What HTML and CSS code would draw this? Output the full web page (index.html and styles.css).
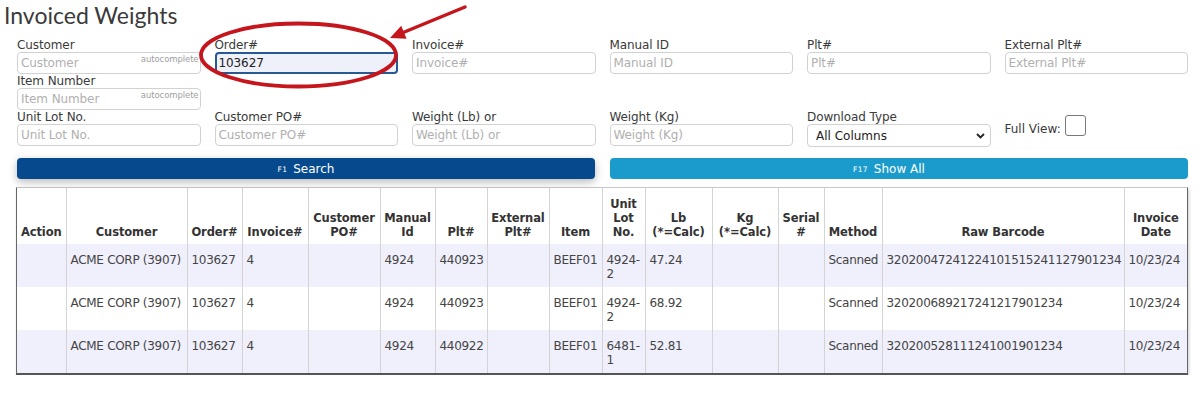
FILE: index.html
```html
<!DOCTYPE html>
<html lang="en">
<head>
<meta charset="utf-8">
<title>Invoiced Weights</title>
<link rel="stylesheet" href="styles.css">
</head>
<body>
<div class="page">
  <h1 class="title">Invoiced Weights</h1>

  <form class="filters">
    <div class="field">
      <label class="lbl">Customer</label>
      <div class="ac"><input class="inp" placeholder="Customer"><span class="ac-tag">autocomplete</span></div>
    </div>
    <div class="field">
      <label class="lbl">Order#</label>
      <input class="inp inp-active" value="103627" placeholder="Order#">
    </div>
    <div class="field">
      <label class="lbl">Invoice#</label>
      <input class="inp" placeholder="Invoice#">
    </div>
    <div class="field">
      <label class="lbl">Manual ID</label>
      <input class="inp" placeholder="Manual ID">
    </div>
    <div class="field">
      <label class="lbl">Plt#</label>
      <input class="inp" placeholder="Plt#">
    </div>
    <div class="field">
      <label class="lbl">External Plt#</label>
      <input class="inp" placeholder="External Plt#">
    </div>

    <div class="field col-first">
      <label class="lbl">Item Number</label>
      <div class="ac"><input class="inp" placeholder="Item Number"><span class="ac-tag">autocomplete</span></div>
    </div>

    <div class="field col-first">
      <label class="lbl">Unit Lot No.</label>
      <input class="inp" placeholder="Unit Lot No.">
    </div>
    <div class="field">
      <label class="lbl">Customer PO#</label>
      <input class="inp" placeholder="Customer PO#">
    </div>
    <div class="field">
      <label class="lbl">Weight (Lb) or</label>
      <input class="inp" placeholder="Weight (Lb) or">
    </div>
    <div class="field">
      <label class="lbl">Weight (Kg)</label>
      <input class="inp" placeholder="Weight (Kg)">
    </div>
    <div class="field">
      <label class="lbl">Download Type</label>
      <div class="sel-wrap">
        <select class="sel"><option>All Columns</option></select>
        <svg class="chev" width="9" height="6" viewBox="0 0 9 6"><path d="M1 1 L4.5 4.5 L8 1" fill="none" stroke="#222" stroke-width="1.8"/></svg>
      </div>
    </div>
    <div class="field fullview">
      <span class="fv-label">Full View:</span>
      <span class="check"></span>
    </div>
  </form>

  <div class="actions">
    <button class="btn btn-search" type="button"><span class="key">F1</span>Search</button>
    <button class="btn btn-all" type="button"><span class="key">F17</span>Show All</button>
  </div>

  <div class="grid-wrap">
    <table class="grid">
      <colgroup>
        <col style="width:49px"><col style="width:121px"><col style="width:55px"><col style="width:66px">
        <col style="width:72px"><col style="width:55px"><col style="width:52px"><col style="width:62px">
        <col style="width:53px"><col style="width:43px"><col style="width:67px"><col style="width:66px">
        <col style="width:46px"><col style="width:58px"><col style="width:242px"><col style="width:63px">
      </colgroup>
      <thead>
        <tr>
          <th>Action</th>
          <th>Customer</th>
          <th>Order#</th>
          <th>Invoice#</th>
          <th>Customer<br>PO#</th>
          <th>Manual<br>Id</th>
          <th>Plt#</th>
          <th>External<br>Plt#</th>
          <th>Item</th>
          <th>Unit<br>Lot<br>No.</th>
          <th>Lb<br>(*=Calc)</th>
          <th>Kg<br>(*=Calc)</th>
          <th>Serial<br>#</th>
          <th>Method</th>
          <th>Raw Barcode</th>
          <th>Invoice<br>Date</th>
        </tr>
      </thead>
      <tbody>
        <tr class="alt">
          <td></td><td>ACME CORP (3907)</td><td>103627</td><td>4</td><td></td><td>4924</td><td>440923</td><td></td>
          <td>BEEF01</td><td>4924-<br>2</td><td>47.24</td><td></td><td></td><td>Scanned</td>
          <td class="nw">32020047241224101515241127901234</td><td>10/23/24</td>
        </tr>
        <tr>
          <td></td><td>ACME CORP (3907)</td><td>103627</td><td>4</td><td></td><td>4924</td><td>440923</td><td></td>
          <td>BEEF01</td><td>4924-<br>2</td><td>68.92</td><td></td><td></td><td>Scanned</td>
          <td class="nw">320200689217241217901234</td><td>10/23/24</td>
        </tr>
        <tr class="alt">
          <td></td><td>ACME CORP (3907)</td><td>103627</td><td>4</td><td></td><td>4924</td><td>440922</td><td></td>
          <td>BEEF01</td><td>6481-<br>1</td><td>52.81</td><td></td><td></td><td>Scanned</td>
          <td class="nw">320200528111241001901234</td><td>10/23/24</td>
        </tr>
      </tbody>
    </table>
  </div>

  <svg class="annot" width="1200" height="100" viewBox="0 0 1200 100">
    <ellipse cx="298.5" cy="55" rx="97.5" ry="31.5" fill="none" stroke="#c4161c" stroke-width="3.8"/>
    <line x1="465" y1="7" x2="402" y2="33" stroke="#c4161c" stroke-width="3.5" stroke-linecap="round"/>
    <polygon points="390,38 401.2,25.8 406.6,38.8" fill="#c4161c"/>
  </svg>
</div>
</body>
</html>
```
FILE: styles.css
```css
* { box-sizing: border-box; }

html, body {
  margin: 0;
  padding: 0;
  background: #fff;
}

body {
  font-family: "DejaVu Sans", Verdana, sans-serif;
  font-size: 12px;
  color: #3a3a3a;
}

.page {
  position: relative;
  width: 1200px;
  padding: 0 12px 0 17px;
}

.title {
  margin: 0 0 8px -13px;
  font-family: Lato, "Open Sans", sans-serif;
  font-weight: 400;
  font-size: 23px;
  line-height: 30px;
  color: #3a3a3a;
}

.filters {
  display: grid;
  grid-template-columns: repeat(6, 1fr);
  column-gap: 14px;
  width: 1171px;
}

.field {
  display: flex;
  flex-direction: column;
}

.col-first { grid-column: 1; }

.lbl {
  display: block;
  height: 14px;
  line-height: 14px;
  font-size: 12px;
  color: #3a3a3a;
  letter-spacing: -0.1px;
}

.inp {
  display: block;
  width: 100%;
  height: 22px;
  margin: 0;
  padding: 0 3px;
  border: 1px solid #d2d2d2;
  border-radius: 4px;
  background: #fff;
  font-family: "DejaVu Sans", Verdana, sans-serif;
  font-size: 12px;
  color: #222;
  outline: none;
  letter-spacing: -0.1px;
}

.inp::placeholder { color: #b0b0b0; }

.inp-active {
  border: 2px solid #275a92;
  background: #eef0fa;
  padding: 0 2px;
  color: #222;
}

.ac { position: relative; }

.ac-tag {
  position: absolute;
  top: 3px;
  right: 2px;
  font-size: 8.5px;
  line-height: 9px;
  color: #a0a0a0;
  letter-spacing: -0.1px;
}

.sel-wrap { position: relative; }

.sel {
  display: block;
  width: 100%;
  height: 23px;
  margin: 0;
  padding: 0 20px 0 8px;
  border: 1px solid #d2d2d2;
  border-radius: 4px;
  background: #fff;
  font-family: "DejaVu Sans", Verdana, sans-serif;
  font-size: 12px;
  color: #222;
  -webkit-appearance: none;
  appearance: none;
}

.chev {
  position: absolute;
  right: 6px;
  top: 9px;
}

.fullview {
  flex-direction: row;
  align-items: center;
  align-self: start;
  margin-top: 5px;
  gap: 4px;
}

.fv-label {
  font-size: 12px;
  color: #3a3a3a;
  padding-top: 6px;
}

.check {
  display: inline-block;
  width: 21px;
  height: 21px;
  border: 1px solid #777;
  border-radius: 3px;
  background: #fff;
}

.actions {
  display: grid;
  grid-template-columns: 1fr 1fr;
  column-gap: 15px;
  width: 1171px;
  margin-top: 11px;
}

.btn {
  display: flex;
  justify-content: center;
  align-items: center;
  gap: 6px;
  height: 21px;
  margin: 0;
  padding: 0;
  border: 0;
  border-radius: 4px;
  font-family: "DejaVu Sans", Verdana, sans-serif;
  font-size: 12px;
  color: #fff;
}

.btn-search {
  background: #064a8d;
  box-shadow: 0 3px 9px rgba(0, 0, 0, 0.28);
}

.btn-all {
  background: #1a9bcb;
  padding-right: 20px;
}

.key {
  font-size: 7.5px;
  letter-spacing: 0.3px;
  padding-top: 2px;
}

.grid-wrap {
  width: 1172px;
  margin: 8px 0 0 -1px;
  border: 1px solid #c8c8c8;
  border-left-color: #666;
  border-right-color: #666;
  border-bottom: 2px solid #555;
  box-shadow: 1px 2px 3px rgba(0, 0, 0, 0.2);
}

.grid {
  width: 1170px;
  table-layout: fixed;
  border-collapse: collapse;
}

.grid th {
  padding: 9px 2px 5px;
  vertical-align: bottom;
  text-align: center;
  font-size: 11.5px;
  line-height: 14px;
  font-weight: bold;
  color: #333;
  white-space: nowrap;
  letter-spacing: -0.1px;
  border-left: 1px solid #d4d4d4;
  background: #fff;
}

.grid td {
  padding: 9px 4px 6px;
  vertical-align: top;
  text-align: left;
  font-size: 12px;
  line-height: 14px;
  color: #444;
  letter-spacing: -0.3px;
  border-left: 1px solid #d4d4d4;
}

.grid th:first-child,
.grid td:first-child { border-left: 0; }

.grid tr.alt td { background: #f0f0fc; }

.grid td.nw { white-space: nowrap; }

.annot {
  position: absolute;
  left: 0;
  top: 0;
  pointer-events: none;
}
```
